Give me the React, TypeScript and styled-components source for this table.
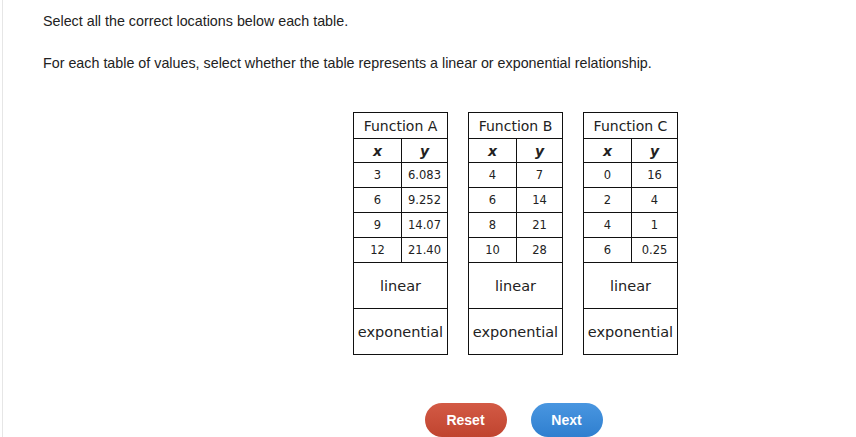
import styled, { createGlobalStyle } from "styled-components";

const GlobalStyle = createGlobalStyle`
  body {
    margin: 0;
    background: #ffffff;
    font-family: "Liberation Sans", Arial, sans-serif;
  }
`;

const Page = styled.div`
  width: 856px;
  height: 437px;
  box-sizing: border-box;
  border-left: 1px solid #e6e6e6;
  margin-left: 2px;
  padding: 12px 0 0 40px;
  overflow: hidden;
  color: #222;
`;

const Prompt = styled.p`
  margin: 0 0 ${(p: { $gap: number }) => p.$gap}px;
  font-size: 14.3px;
  line-height: 18px;
`;

const Stage = styled.div`
  display: flex;
  justify-content: center;
  gap: 20px;
  padding-left: 130px;
  margin-top: 40px;
`;

const Table = styled.table`
  border-collapse: collapse;
  width: 95px;
  font-family: "DejaVu Sans", Verdana, sans-serif;
  color: #222;
  td, th {
    border: 1px solid #111;
    padding: 0;
    text-align: center;
  }
`;

const Title = styled.th`
  height: 25px;
  font-size: 14px;
  font-weight: normal;
`;

const Var = styled.th`
  height: 23px;
  font-size: 14px;
  font-weight: bold;
  font-style: italic;
`;

const Cell = styled.td<{ $w?: number }>`
  height: 24px;
  font-size: 11.5px;
  width: ${(p) => (p.$w ? `${p.$w}px` : "auto")};
`;

const Choice = styled.td`
  height: 45px;
  font-size: 14.5px;
`;

const Buttons = styled.div`
  display: flex;
  justify-content: center;
  gap: 24px;
  padding-left: 126px;
  margin-top: 48px;
`;

const Button = styled.button<{ $color: string; $dark: string; $w: number }>`
  width: ${(p) => p.$w}px;
  height: 34px;
  border: none;
  border-radius: 17px;
  background: linear-gradient(${(p) => p.$color}, ${(p) => p.$dark});
  color: #fff;
  font-family: "Liberation Sans", Arial, sans-serif;
  font-weight: bold;
  font-size: 14px;
  padding: 0;
`;

const tables = [
  { name: "Function A", rows: [["3", "6.083"], ["6", "9.252"], ["9", "14.07"], ["12", "21.40"]] },
  { name: "Function B", rows: [["4", "7"], ["6", "14"], ["8", "21"], ["10", "28"]] },
  { name: "Function C", rows: [["0", "16"], ["2", "4"], ["4", "1"], ["6", "0.25"]] },
];

export default function App() {
  return (
    <>
      <GlobalStyle />
      <Page>
        <Prompt $gap={24}>Select all the correct locations below each table.</Prompt>
        <Prompt $gap={0}>
          For each table of values, select whether the table represents a linear or exponential relationship.
        </Prompt>
        <Stage>
          {tables.map((t) => (
            <Table key={t.name}>
              <thead>
                <tr>
                  <Title colSpan={2}>{t.name}</Title>
                </tr>
                <tr>
                  <Var>x</Var>
                  <Var>y</Var>
                </tr>
              </thead>
              <tbody>
                {t.rows.map((r) => (
                  <tr key={r[0]}>
                    <Cell $w={47}>{r[0]}</Cell>
                    <Cell>{r[1]}</Cell>
                  </tr>
                ))}
                <tr>
                  <Choice colSpan={2}>linear</Choice>
                </tr>
                <tr>
                  <Choice colSpan={2}>exponential</Choice>
                </tr>
              </tbody>
            </Table>
          ))}
        </Stage>
        <Buttons>
          <Button $color="#d35a45" $dark="#c0442f" $w={82}>Reset</Button>
          <Button $color="#4996e0" $dark="#2f7fcf" $w={72}>Next</Button>
        </Buttons>
      </Page>
    </>
  );
}
